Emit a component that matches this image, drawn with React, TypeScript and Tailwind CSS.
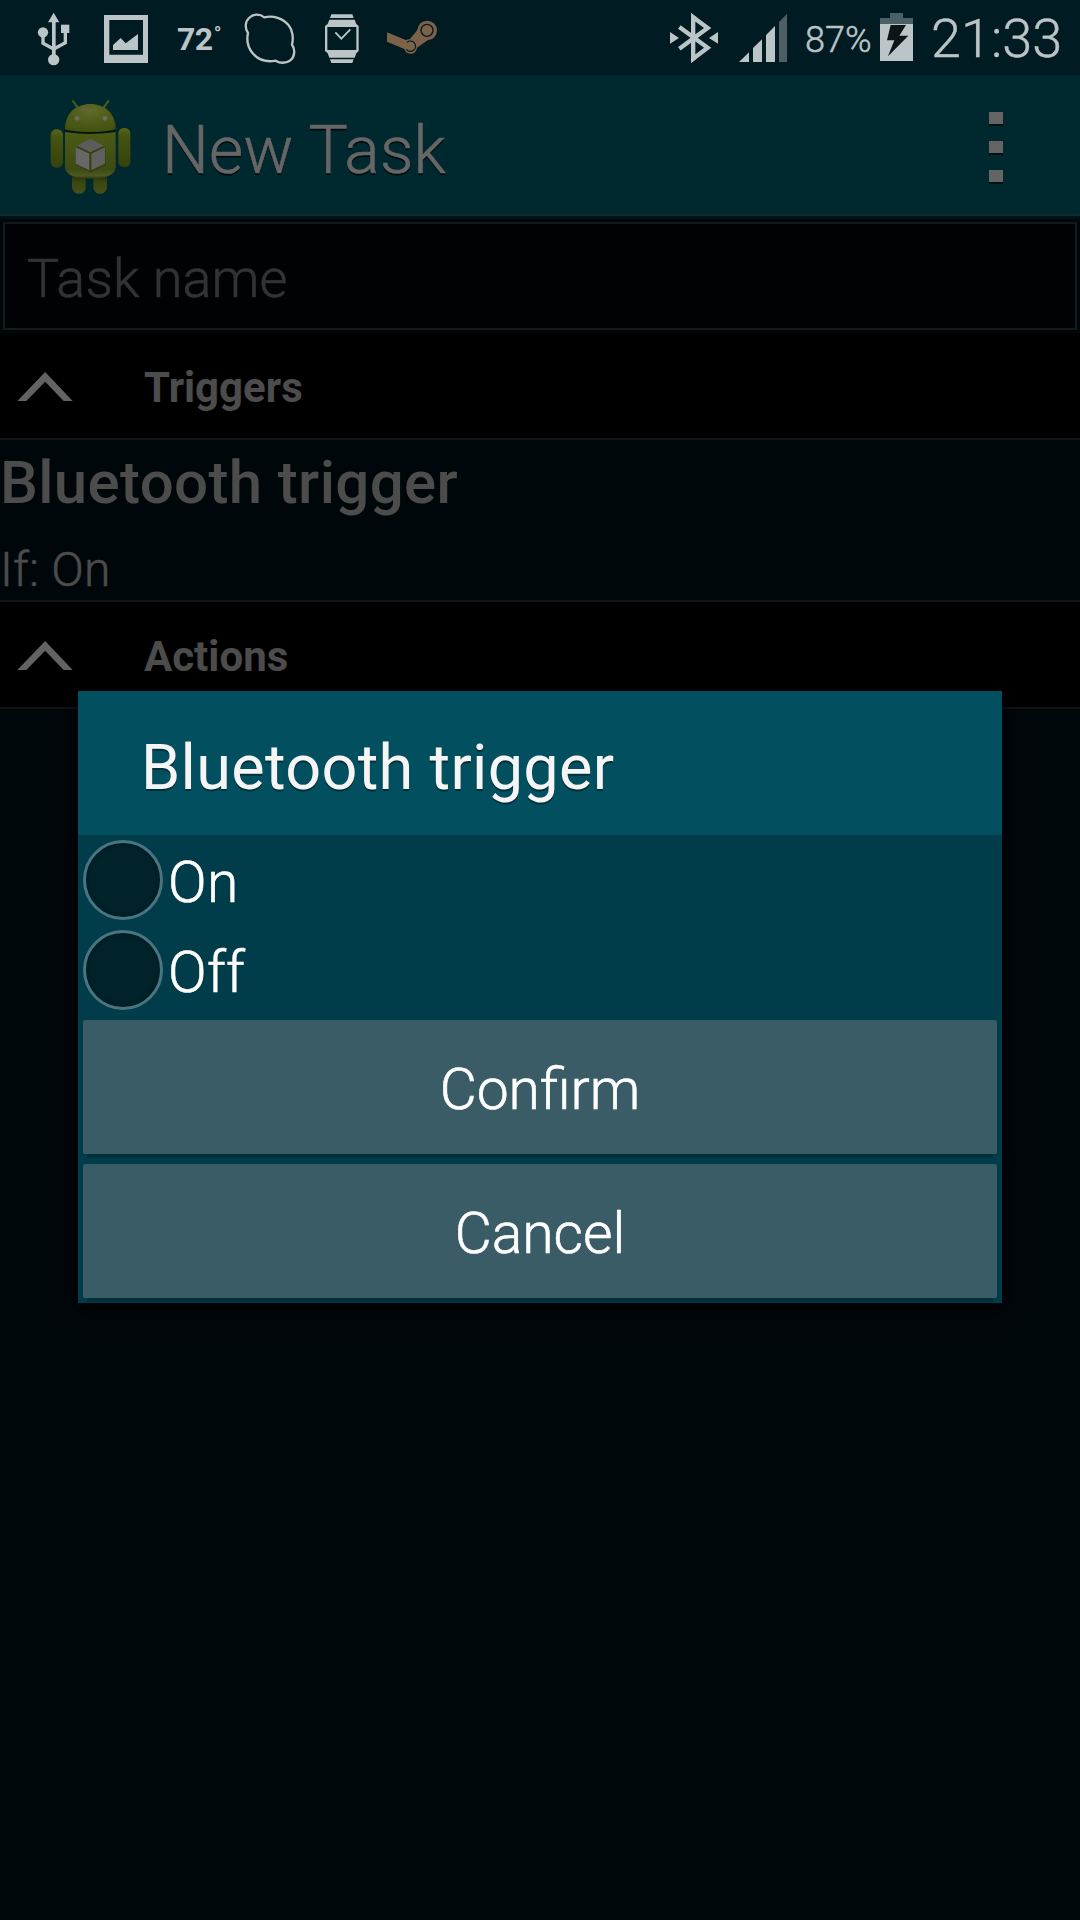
import React from "react";

const ink = "#bbc4c7";

function UsbIcon() {
  return (
    <svg className="ml-9 h-[75px] w-9 shrink-0" viewBox="108 0 108 225" fill={ink}>
      <path d="M161 38 L178 67 H144 Z" />
      <rect x="156" y="60" width="11" height="110" />
      <circle cx="161" cy="179" r="17" />
      <circle cx="129" cy="97" r="15.5" />
      <rect x="183" y="74" width="25" height="25" />
      <path d="M129 105 V130 L161 147 L196 128 V98" fill="none" stroke={ink} strokeWidth="10" />
    </svg>
  );
}

function PictureIcon() {
  return (
    <svg className="ml-[30px] h-[75px] w-12 shrink-0" viewBox="306 0 144 225" fill={ink}>
      <path fillRule="evenodd" d="M312 45 H444 V189 H312 Z M328 60 V164 H429 V60 Z" />
      <path d="M339 150 V135 L362 114 L377 130 L414 102 V150 Z" />
    </svg>
  );
}

function SpeechIcon() {
  return (
    <svg className="h-[75px] w-[54px] shrink-0" viewBox="39 0 162 225" fill="none">
      <path
        d="M103 52 C130 46 158 54 176 76 C188 91 191 115 186 134 C197 148 194 171 181 181 C169 191 149 190 137 182 C110 187 85 180 68 160 C53 142 49 122 54 99 C45 87 44 66 57 54 C69 42 88 40 103 52 Z"
        stroke={ink}
        strokeWidth="7"
        strokeLinejoin="round"
      />
    </svg>
  );
}

function WatchIcon() {
  return (
    <svg className="ml-[26px] h-[75px] w-[38px] shrink-0" viewBox="279 0 114 225" fill={ink}>
      <path d="M304 43 H367 L371 54 H300 Z M300 178 H371 L367 189 H304 Z" />
      <path
        fillRule="evenodd"
        d="M298 59 H374 L379 72 L386 78 V153 L379 160 L374 173 H298 L293 160 L285 153 V78 L293 72 Z M292 81 V150 H379 V81 Z"
      />
      <path d="M316 97 L334 116 L361 88" fill="none" stroke={ink} strokeWidth="5.5" />
    </svg>
  );
}

function SteamIcon() {
  return (
    <svg className="ml-[26px] h-[75px] w-[52px] shrink-0" viewBox="471 0 156 225">
      <path
        fill="#7b6249"
        d="M471 97 L527 120 C532 119 536 118 540 117 L562 90 A29.5 29.5 0 1 1 593 121 L561 143 C559 156 550 162 541 161 C531 160 525 155 523 147 L471 125 Z"
      />
      <circle cx="591" cy="91" r="18" fill="none" stroke="#001b21" strokeWidth="4" />
      <path d="M531 127 A15.5 15.5 0 1 1 529 148" fill="none" stroke="#001b21" strokeWidth="3.5" />
    </svg>
  );
}

function BluetoothIcon() {
  return (
    <svg className="ml-[229px] h-[75px] w-[52px] shrink-0" viewBox="84 0 156 225" fill={ink}>
      <path d="M90 96 L117 114 L90 131 Z M234 96 L207 114 L234 131 Z" />
      <path
        d="M118 81 L203 143 L159.500 176 V52 L203 84 L118 146"
        fill="none"
        stroke={ink}
        strokeWidth="13"
      />
      <path d="M153 39 L172 53 H153 Z M153 189 L172 175 H153 Z" />
    </svg>
  );
}

function SignalIcon() {
  return (
    <svg className="ml-[18px] h-[75px] w-[50px] shrink-0" viewBox="294 0 150 225" fill={ink}>
      <path d="M297 186 L327 157 V186 Z M339 186 V144 L366 118 V186 Z M378 186 V105 L405 78 V186 Z" />
      <path d="M417 186 V66 L441 41 V186 Z" fill="#4b5f64" />
    </svg>
  );
}

function BatteryIcon() {
  return (
    <svg className="h-[75px] w-9 shrink-0" viewBox="87 0 108 225">
      <path d="M90 72 V54 H120 V39 H159 V54 H189 V72 Z" fill="#4b5f64" />
      <rect x="90" y="72" width="99" height="111" fill={ink} />
      <path d="M122 75 H168 L148 107 H175 L114 169 L133 121 H111 Z" fill="#0d1518" />
    </svg>
  );
}

function AndroidIcon() {
  return (
    <svg className="mt-0.5 ml-[47px] h-[100px] w-[88px] shrink-0" viewBox="141 78 264 300">
      <defs>
        <linearGradient id="body" x1="0" y1="0" x2="0" y2="1">
          <stop offset="0" stopColor="#4c5a16" />
          <stop offset="0.8" stopColor="#3d4a12" />
          <stop offset="0.93" stopColor="#4b5a20" />
          <stop offset="1" stopColor="#2f3a0c" />
        </linearGradient>
        <radialGradient id="head" cx="0.5" cy="0.25" r="0.75">
          <stop offset="0" stopColor="#606c2a" />
          <stop offset="0.5" stopColor="#4f5d18" />
          <stop offset="1" stopColor="#435210" />
        </radialGradient>
        <linearGradient id="limb" x1="0" y1="0" x2="0" y2="1">
          <stop offset="0" stopColor="#56671c" />
          <stop offset="0.2" stopColor="#45540f" />
          <stop offset="1" stopColor="#35420d" />
        </linearGradient>
        <linearGradient id="leg" x1="0" y1="0" x2="0" y2="1">
          <stop offset="0" stopColor="#1e2606" />
          <stop offset="0.5" stopColor="#3a4710" />
          <stop offset="1" stopColor="#435018" />
        </linearGradient>
      </defs>
      <path d="M219 93 L233 113 M325 93 L311 113" stroke="#4d5c1a" strokeWidth="6" strokeLinecap="round" />
      <path d="M216 305 H257 V353 Q254 371 237 371 Q220 371 216 353 Z" fill="url(#leg)" />
      <path d="M280 305 H321 V353 Q317 371 300 371 Q283 371 280 353 Z" fill="url(#leg)" />
      <rect x="152" y="178" width="37" height="115" rx="16" fill="url(#limb)" />
      <rect x="355" y="174" width="36" height="117" rx="16" fill="url(#limb)" />
      <path d="M195 186 Q271 196 347 186 V292 Q344 326 271 326 Q198 326 195 292 Z" fill="url(#body)" />
      <path d="M195 183 Q271 195 347 183" fill="none" stroke="#0c1202" strokeWidth="5" />
      <path d="M195 177 C195 130 228 102 271 102 C314 102 347 130 347 177 Q330 185 271 186 Q212 185 195 177 Z" fill="url(#head)" />
      <path d="M238 121 Q251 108 272 112 Q278 124 262 125 Q245 126 238 121 Z" fill="#626235" />
      <circle cx="231" cy="145" r="7" fill="#6a6b66" />
      <circle cx="315" cy="145" r="7" fill="#6a6b66" />
      <path d="M271 212 L317 232 V284 L273 307 L227 284 V232 Z" fill="#303b0c" opacity=".75" />
      <path d="M271 206 L312 227 L271 247 L231 227 Z" fill="#5c5c5c" />
      <path d="M227 232 L268 251 V301 L227 281 Z" fill="#676767" />
      <path d="M315 232 L274 251 V301 L315 281 Z" fill="#606060" />
    </svg>
  );
}

function SectionHeader({ title }: { title: string }) {
  return (
    <div className="flex h-[107px] items-start border-b-2 border-[#0e1518] bg-black">
      <svg className="ml-[17px] mt-[38px] h-[31px] w-14 shrink-0" viewBox="0 0 168 93" fill="#636363">
        <path d="M1 90 L84.500 3 L167 90 H140 L84.500 32 L28 90 Z" />
      </svg>
      <span className="ml-[71px] mt-[25px] text-[42px] leading-[60px] font-bold text-[#4c4c4c]">{title}</span>
    </div>
  );
}

function RadioRow({ label }: { label: string }) {
  return (
    <label className="flex h-[90px] items-start pt-[5px]">
      <span className="ml-[5px] size-20 shrink-0 rounded-full border-[3px] border-[#4a7480] bg-[#00232a] shadow-[inset_0_0_6px_#001a20]" />
      <span className="ml-[5px] mt-[3px] text-[57px] leading-[80px] font-light tracking-[0.3px] text-white [-webkit-text-stroke:0.6px_currentColor]">
        {label}
      </span>
    </label>
  );
}

function DialogButton({ label }: { label: string }) {
  return (
    <button className="mx-[5px] flex h-[134px] shrink-0 items-center justify-center rounded-[2px] bg-[#3a5c67] pt-[7px] text-[57px] leading-[64px] font-light text-white shadow-[0_8px_0_-4px_#032f38] [-webkit-text-stroke:0.6px_currentColor]">
      {label}
    </button>
  );
}

export default function App() {
  return (
    <div className="relative flex h-[1920px] w-[1080px] flex-col overflow-hidden bg-[#00070a] font-['Roboto',sans-serif]">
      <header className="flex h-[75px] shrink-0 items-center bg-[#001b21] text-[#bbc4c7]">
        <UsbIcon />
        <PictureIcon />
        <span className="flex w-[93px] items-start pt-[3px] pl-[27px] text-[32px] leading-[48px] font-bold tracking-[-0.5px]">
          72<span className="ml-px text-[20px] leading-[38px]">°</span>
        </span>
        <SpeechIcon />
        <WatchIcon />
        <SteamIcon />
        <BluetoothIcon />
        <SignalIcon />
        <span className="w-[91px] pl-[17px] pt-1 text-[36px] leading-[44px] font-light [-webkit-text-stroke:0.5px_currentColor]">87%</span>
        <BatteryIcon />
        <span className="pl-4 pt-0.5 text-[54px] leading-[64px] font-light [-webkit-text-stroke:0.4px_currentColor]">21:33</span>
      </header>

      <div className="flex h-[144px] shrink-0 items-start border-b-[3px] border-[#001216] bg-[#00282f]">
        <div className="flex h-[141px] w-full items-center border-b-2 border-[#0e2d33]">
          <AndroidIcon />
          <h1 className="ml-[27px] pt-[13px] text-[66px] leading-[80px] font-light tracking-[0.2px] text-[#666] [text-shadow:0_2px_0_#00090c] [-webkit-text-stroke:0.6px_currentColor]">New Task</h1>
          <div className="mt-1 mr-[77px] ml-auto flex flex-col gap-[17px]">
            <i className="h-3 w-3.5 bg-[#646464] shadow-[0_2px_0_#000f13]" />
            <i className="h-3 w-3.5 bg-[#646464] shadow-[0_2px_0_#000f13]" />
            <i className="h-3 w-3.5 bg-[#646464] shadow-[0_2px_0_#000f13]" />
          </div>
        </div>
      </div>

      <div className="mx-[3px] mt-[3px] mb-[3px] flex h-[108px] shrink-0 items-center border-2 border-[#15191b] bg-[#000306] pt-[5px] pl-[22px] text-[54px] leading-[64px] font-light tracking-[0.1px] text-[#303435] [-webkit-text-stroke:0.6px_currentColor]">
        Task name
      </div>

      <SectionHeader title="Triggers" />
      <div className="flex h-[162px] shrink-0 flex-col border-b-2 border-[#0e1518] text-[#4c4c4c]">
        <span className="mt-[7px] text-[60px] leading-[72px] font-medium tracking-[0.35px]">Bluetooth trigger</span>
        <span className="mt-[22px] text-[48px] leading-[58px] font-light tracking-[0.2px] [-webkit-text-stroke:0.5px_currentColor]">If: On</span>
      </div>
      <SectionHeader title="Actions" />

      <div className="absolute inset-x-0 top-[73px] bottom-0 flex items-center justify-center">
        <div className="flex h-[612px] w-[924px] flex-col overflow-visible bg-[#003c49] shadow-[0_4px_18px_#000]">
          <h2 className="flex h-36 shrink-0 items-center bg-[#02505f] pt-2.5 pl-[63px] text-[63px] leading-[76px] tracking-[0.3px] text-[#f5f5f5] [text-shadow:0_2px_0_#00303a]">
            Bluetooth trigger
          </h2>
          <RadioRow label="On" />
          <RadioRow label="Off" />
          <div className="mt-[5px] flex flex-col gap-[10px]">
            <DialogButton label="Confirm" />
            <DialogButton label="Cancel" />
          </div>
        </div>
      </div>
    </div>
  );
}
